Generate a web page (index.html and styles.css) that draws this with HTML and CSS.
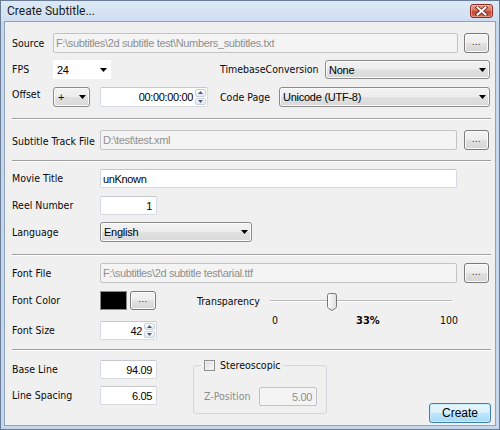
FILE: index.html
```html
<!DOCTYPE html>
<html lang="en">
<head>
<meta charset="utf-8">
<title>Create Subtitle...</title>
<link rel="stylesheet" href="styles.css">
</head>
<body>
<div class="window">
  <div class="titlebar">
    <span class="title">Create Subtitle...</span>
    <span class="close">
      <svg width="13" height="10" viewBox="0 0 13 10">
        <path d="M2.5 1.5 L10.5 8.5 M10.5 1.5 L2.5 8.5" stroke="#6b2318" stroke-width="3.6" stroke-linecap="square" fill="none"/>
        <path d="M2.5 1.5 L10.5 8.5 M10.5 1.5 L2.5 8.5" stroke="#ffffff" stroke-width="2" stroke-linecap="square" fill="none"/>
      </svg>
    </span>
  </div>

  <div class="client">
    <!-- Source / FPS / Offset -->
    <div class="row h20 first">
      <span class="lbl lbl-short">Source</span>
      <span class="tb dis path-wide">F:\subtitles\2d subtitle test\Numbers_subtitles.txt</span>
      <span class="btn dots gap6">...</span>
    </div>
    <div class="row h19 mt7">
      <span class="lbl lbl-short">FPS</span>
      <span class="cb flat fps"><span class="val">24</span><svg class="arr" width="7" height="4" viewBox="0 0 7 4"><path d="M0 0H7L3.5 4Z"/></svg></span>
      <span class="lbl timebase-lbl">TimebaseConversion</span>
      <span class="cb timebase"><span class="val">None</span><svg class="arr" width="7" height="4" viewBox="0 0 7 4"><path d="M0 0H7L3.5 4Z"/></svg></span>
    </div>
    <div class="row h20 mt8">
      <span class="lbl lbl-short up">Offset</span>
      <span class="cb sign"><span class="val">+</span><svg class="arr" width="7" height="4" viewBox="0 0 7 4"><path d="M0 0H7L3.5 4Z"/></svg></span>
      <span class="tb numbox timebox">
        <span class="num">00:00:00:00</span>
        <span class="spin">
          <span class="sb"><svg width="5" height="3" viewBox="0 0 5 3"><path d="M0 3H5L2.5 0Z"/></svg></span>
          <span class="sb"><svg width="5" height="3" viewBox="0 0 5 3"><path d="M0 0H5L2.5 3Z"/></svg></span>
        </span>
      </span>
      <span class="lbl codepage-lbl">Code Page</span>
      <span class="cb codepage"><span class="val">Unicode (UTF-8)</span><svg class="arr" width="7" height="4" viewBox="0 0 7 4"><path d="M0 0H7L3.5 4Z"/></svg></span>
    </div>

    <div class="sep mt11"></div>

    <!-- Track file -->
    <div class="row h20 mt10">
      <span class="lbl lbl-long down">Subtitle Track File</span>
      <span class="tb dis path">D:\test\test.xml</span>
      <span class="btn dots gap7">...</span>
    </div>

    <div class="sep mt10"></div>

    <!-- Movie -->
    <div class="row h19 mt7">
      <span class="lbl lbl-long">Movie Title</span>
      <span class="tb path">unKnown</span>
    </div>
    <div class="row h19 mt8">
      <span class="lbl lbl-long">Reel Number</span>
      <span class="tb right small">1</span>
    </div>
    <div class="row h20 mt7">
      <span class="lbl lbl-long">Language</span>
      <span class="cb language"><span class="val">English</span><svg class="arr" width="7" height="4" viewBox="0 0 7 4"><path d="M0 0H7L3.5 4Z"/></svg></span>
    </div>

    <div class="sep mt12"></div>

    <!-- Font -->
    <div class="row h20 mt7">
      <span class="lbl lbl-long">Font File</span>
      <span class="tb dis path">F:\subtitles\2d subtitle test\arial.ttf</span>
      <span class="btn dots gap7">...</span>
    </div>
    <div class="font-block">
      <div class="font-left">
        <div class="row h19">
          <span class="lbl lbl-long">Font Color</span>
          <span class="swatch"></span>
          <span class="btn dots color-btn">...</span>
        </div>
        <div class="row h19 mt11">
          <span class="lbl lbl-long">Font Size</span>
          <span class="tb numbox small">
            <span class="num">42</span>
            <span class="spin">
              <span class="sb"><svg width="5" height="3" viewBox="0 0 5 3"><path d="M0 3H5L2.5 0Z"/></svg></span>
              <span class="sb"><svg width="5" height="3" viewBox="0 0 5 3"><path d="M0 0H5L2.5 3Z"/></svg></span>
            </span>
          </span>
        </div>
      </div>
      <div class="transparency">
        <div class="slider-row">
          <span class="lbl trans-lbl">Transparency</span>
          <span class="slider">
            <span class="track"></span>
            <svg class="thumb" width="10" height="18" viewBox="0 0 10 18" style="margin-left:57px">
              <defs>
                <linearGradient id="tg" x1="0" y1="0" x2="1" y2="0">
                  <stop offset="0" stop-color="#ffffff"/>
                  <stop offset="1" stop-color="#dcdcdc"/>
                </linearGradient>
              </defs>
              <path d="M0.5 2.5Q0.5 0.5 2.5 0.5H7.5Q9.5 0.5 9.5 2.5V13.5Q9.5 14.5 8.5 15.3L5 17.5L1.5 15.3Q0.5 14.5 0.5 13.5Z" fill="url(#tg)" stroke="#767676"/>
            </svg>
          </span>
        </div>
        <div class="ticks">
          <span class="tick t0">0</span>
          <span class="tick t33">33%</span>
          <span class="tick">100</span>
        </div>
      </div>
    </div>

    <div class="sep mt9"></div>

    <!-- Base line / stereo -->
    <div class="bottom-block">
      <div class="base-left">
        <div class="row h19 mt9">
          <span class="lbl lbl-long">Base Line</span>
          <span class="tb right small">94.09</span>
        </div>
        <div class="row h19 mt7">
          <span class="lbl lbl-long">Line Spacing</span>
          <span class="tb right small">6.05</span>
        </div>
      </div>
      <fieldset class="group">
        <legend class="legend"><span class="check"></span><span class="lbl">Stereoscopic</span></legend>
        <div class="row h19 zrow">
          <span class="lbl zlbl">Z-Position</span>
          <span class="tb dis right zbox">5.00</span>
        </div>
      </fieldset>
      <span class="btn create">Create</span>
    </div>
  </div>
</div>
</body>
</html>
```

FILE: styles.css
```css
html, body {
  margin: 0;
  padding: 0;
  background: #c6d8ee;
}

.window {
  width: 500px;
  height: 430px;
  box-sizing: border-box;
  border: 1px solid #6b7d96;
  background: linear-gradient(#dde9f6 0px, #cfdef0 20px, #c5d7ed 21px, #c5d7ed 100%);
  padding: 0 3px 3px 3px;
  display: flex;
  flex-direction: column;
  font-family: "DejaVu Sans Condensed", "DejaVu Sans", sans-serif;
  font-stretch: condensed;
  font-size: 10.5px;
  color: #0a0a0a;
}

.titlebar {
  height: 20px;
  flex: none;
  display: flex;
  align-items: center;
  justify-content: space-between;
  padding: 0 3px;
}

.title {
  font-family: Roboto, "Liberation Sans", sans-serif;
  font-stretch: normal;
  font-size: 12px;
  color: #1b1b1b;
}

.close {
  width: 23px;
  height: 14px;
  box-sizing: border-box;
  border: 1px solid #8b2d1f;
  border-radius: 3px;
  background: linear-gradient(#e7a596 0%, #d6735f 45%, #c44a33 55%, #cf6a55 100%);
  box-shadow: inset 0 0 0 1px rgba(255, 210, 200, 0.45);
  display: flex;
  align-items: center;
  justify-content: center;
}

.client {
  flex: 1;
  background: #f0f0f0;
  border: 1px solid #8fa2bb;
  padding: 0 4px 0 7px;
  display: flex;
  flex-direction: column;
}

/* rows */
.row {
  display: flex;
  align-items: center;
  flex: none;
}
.h19 { height: 19px; }
.h20 { height: 20px; }
.first { margin-top: 11px; }
.mt7 { margin-top: 7px; }
.mt8 { margin-top: 8px; }
.mt9 { margin-top: 9px; }
.mt10 { margin-top: 10px; }
.mt11 { margin-top: 11px; }
.mt12 { margin-top: 12px; }

.lbl {
  white-space: nowrap;
  line-height: 13px;
  flex: none;
}
.lbl-short { width: 41px; }
.lbl-long { width: 88px; }
.up { align-self: flex-start; padding-top: 1px; }
.down { padding-top: 3px; }
.timebase-lbl { width: 105px; margin-left: 109px; }
.codepage-lbl { width: 59px; margin-left: 12px; }

/* separators */
.sep {
  flex: none;
  height: 0;
  border-top: 1px solid #a0a0a0;
  border-bottom: 1px solid #ffffff;
}

/* text boxes */
.tb {
  box-sizing: border-box;
  height: 100%;
  flex: none;
  display: flex;
  align-items: center;
  padding: 0 2px;
  background: #ffffff;
  border: 1px solid #d6dae0;
  border-top-color: #c4c8ce;
  border-radius: 2px;
  font-family: "Liberation Sans", Arial, sans-serif;
  font-stretch: normal;
  font-size: 11px;
  letter-spacing: -0.35px;
  color: #000;
  white-space: nowrap;
  overflow: hidden;
}
.tb.dis {
  background: #f4f4f4;
  border-color: #c3c3c3;
  color: #8f8f8f;
}
.tb.right { justify-content: flex-end; padding-right: 4px; }
.path-wide { width: 405px; }
.path { width: 357px; }
.small { width: 57px; }
.timebox { width: 108px; margin-left: 10px; }

.numbox { padding: 0 0 0 2px; }
.numbox .num {
  flex: 1;
  text-align: right;
  padding-right: 2px;
}
.spin {
  width: 11px;
  align-self: stretch;
  display: flex;
  flex-direction: column;
  margin: 1px 1px 1px 0;
  gap: 1px;
}
.sb {
  flex: 1;
  display: flex;
  align-items: center;
  justify-content: center;
  border: 1px solid #c9d1dc;
  border-radius: 2px;
  background: linear-gradient(#fafbfd, #e4e9f0);
}
.sb svg { fill: #4a5d80; }

/* combo boxes */
.cb {
  box-sizing: border-box;
  height: 100%;
  flex: none;
  display: flex;
  align-items: center;
  justify-content: space-between;
  padding: 0 3px 0 3px;
  border: 1px solid #8c8c8c;
  border-radius: 3px;
  background: linear-gradient(#f3f3f3 0%, #ececec 48%, #e0e0e0 52%, #d9d9d9 100%);
  box-shadow: inset 0 0 0 1px #fafafa;
  font-family: "Liberation Sans", Arial, sans-serif;
  font-stretch: normal;
  font-size: 11px;
  letter-spacing: -0.25px;
  color: #000;
  white-space: nowrap;
}
.cb .arr { fill: #000; flex: none; }
.cb.flat {
  border-color: transparent;
  box-shadow: none;
  background: #ffffff;
  border-radius: 0;
}
.fps { width: 58px; }
.timebase { width: 165px; }
.sign { width: 37px; padding-left: 4px; }
.codepage { width: 211px; }
.language { width: 152px; }

/* buttons */
.btn {
  box-sizing: border-box;
  flex: none;
  display: flex;
  align-items: center;
  justify-content: center;
  border: 1px solid #7a7a7a;
  border-radius: 3px;
  background: linear-gradient(#f4f4f4 0%, #ededed 48%, #e0e0e0 52%, #d6d6d6 100%);
  box-shadow: inset 0 0 0 1px #fbfbfb;
  color: #222;
  font-family: "Liberation Sans", Arial, sans-serif;
  font-stretch: normal;
}
.dots {
  width: 25px;
  height: 20px;
  font-size: 9px;
  letter-spacing: 0.5px;
  padding-bottom: 3px;
}
.gap6 { margin-left: 6px; }
.gap7 { margin-left: 7px; }

/* font block */
.font-block {
  display: flex;
  margin-top: 8px;
  flex: none;
}
.font-left {
  width: 185px;
  flex: none;
  display: flex;
  flex-direction: column;
}
.swatch {
  width: 27px;
  height: 19px;
  box-sizing: border-box;
  background: #000;
  border: 1px solid #8a8a8a;
  flex: none;
}
.color-btn {
  width: 26px;
  height: 19px;
  margin-left: 3px;
}

.transparency {
  display: flex;
  flex-direction: column;
}
.slider-row {
  height: 20px;
  display: flex;
  align-items: center;
}
.trans-lbl { width: 73px; }
.slider {
  width: 182px;
  height: 20px;
  display: flex;
  align-items: flex-start;
  position: relative;
}
.track {
  position: absolute;
  left: 0;
  right: 0;
  top: 9px;
  height: 1px;
  background: #b9b9b9;
  border-bottom: 1px solid #ffffff;
}
.thumb {
  position: relative;
  margin-top: 2px;
}
.ticks {
  height: 18px;
  display: flex;
  align-items: center;
  padding-left: 75px;
}
.tick { line-height: 13px; }
.t0 { width: 84px; }
.t33 { width: 84px; font-weight: bold; font-size: 11px; }

/* bottom block */
.bottom-block {
  display: flex;
  align-items: flex-start;
  flex: none;
}
.base-left {
  width: 181px;
  flex: none;
  display: flex;
  flex-direction: column;
}
.group {
  margin: 8px 0 0 0;
  padding: 0 9px 7px 10px;
  border: 1px solid #d3d7dc;
  border-radius: 3px;
  width: 134px;
  box-sizing: border-box;
  min-width: 0;
}
.legend {
  padding: 0 3px;
  margin-left: -3px;
  height: 13px;
  display: flex;
  align-items: center;
}
.check {
  width: 11px;
  height: 11px;
  box-sizing: border-box;
  border: 1px solid #8e8f8f;
  background: linear-gradient(135deg, #d9d9d9, #fbfbfb);
  box-shadow: inset 0 0 0 1px #f2f2f2;
  margin-right: 5px;
  flex: none;
}
.zrow { margin-top: 15px; }
.zlbl { width: 55px; color: #8d8d8d; }
.zbox { width: 58px; }

.create {
  width: 62px;
  height: 20px;
  margin-top: 52px;
  margin-left: auto;
  border-color: #3c7fb1;
  background: linear-gradient(#eaf6fd 0%, #d9f0fc 48%, #bee6fd 52%, #a7d9f5 100%);
  box-shadow: inset 0 0 0 1px #c5ebfd;
  color: #000;
  font-size: 12px;
  letter-spacing: 0;
}
```
